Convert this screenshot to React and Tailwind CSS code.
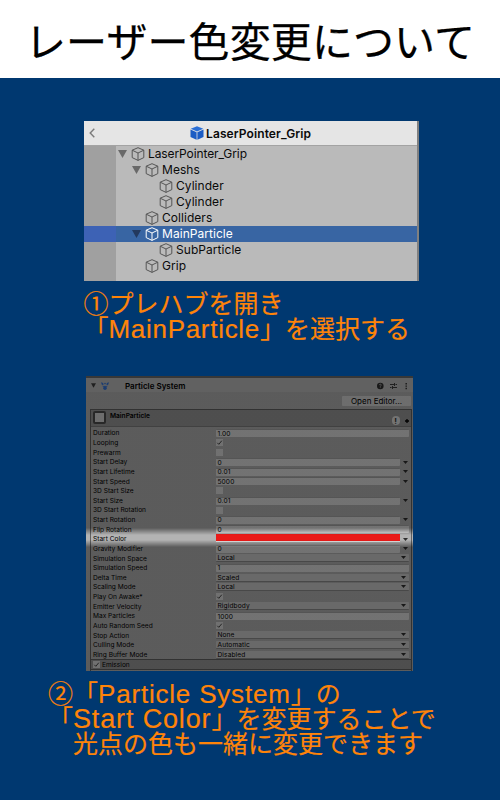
const TREE = [
  { name: 'LaserPointer_Grip', pad: 'pl-0', open: true },
  { name: 'Meshs', pad: 'pl-[14px]', open: true },
  { name: 'Cylinder', pad: 'pl-[28px]' },
  { name: 'Cylinder', pad: 'pl-[28px]' },
  { name: 'Colliders', pad: 'pl-[14px]' },
  { name: 'MainParticle', pad: 'pl-[14px]', open: true, selected: true },
  { name: 'SubParticle', pad: 'pl-[28px]' },
  { name: 'Grip', pad: 'pl-[14px]' },
];

// kinds: full (plain field), curve (field with outer arrow), check, select, color
const PROPS = [
  ['Duration', 'full', '1.00'],
  ['Looping', 'check', true],
  ['Prewarm', 'check', false],
  ['Start Delay', 'curve', '0'],
  ['Start Lifetime', 'curve', '0.01'],
  ['Start Speed', 'curve', '5000'],
  ['3D Start Size', 'check', false],
  ['Start Size', 'curve', '0.01'],
  ['3D Start Rotation', 'check', false],
  ['Start Rotation', 'curve', '0'],
  ['Flip Rotation', 'full', '0'],
  ['Start Color', 'color', ''],
  ['Gravity Modifier', 'curve', '0'],
  ['Simulation Space', 'select', 'Local'],
  ['Simulation Speed', 'full', '1'],
  ['Delta Time', 'select', 'Scaled'],
  ['Scaling Mode', 'select', 'Local'],
  ['Play On Awake*', 'check', true],
  ['Emitter Velocity', 'select', 'Rigidbody'],
  ['Max Particles', 'full', '1000'],
  ['Auto Random Seed', 'check', true],
  ['Stop Action', 'select', 'None'],
  ['Culling Mode', 'select', 'Automatic'],
  ['Ring Buffer Mode', 'select', 'Disabled'],
];

function Cube({ className }) {
  return (
    <svg viewBox="0 0 14 14" className={className} fill="none" stroke="currentColor" strokeWidth="1" strokeLinejoin="round">
      <path d="M7 .7 12.8 3.2V10.6L7 13.4 1.2 10.6V3.2ZM1.2 3.2 7 6 12.8 3.2M7 6V13.4" />
    </svg>
  );
}

function SolidCube() {
  return (
    <svg viewBox="0 0 14 14" className="h-[14px] w-[14px] shrink-0">
      <path d="M7 .3 13.3 2.8 7 5.5.7 2.8Z" fill="#2a6fd6" />
      <path d="M.5 3.6 6.6 6.2V13.8L.5 11Z" fill="#1b5cc4" />
      <path d="M13.5 3.6 7.4 6.2V13.8L13.5 11Z" fill="#1b5cc4" />
    </svg>
  );
}

function Fold({ className }) {
  return (
    <svg viewBox="0 0 9 8" className={className}>
      <path d="M0 0H9L4.5 8Z" fill="currentColor" />
    </svg>
  );
}

function Arrow() {
  return (
    <svg viewBox="0 0 5 3" className="h-[3px] w-[5px] shrink-0">
      <path d="M0 0H5L2.5 3Z" fill="#333" />
    </svg>
  );
}

function Check({ on }) {
  return (
    <div className="h-[7px] w-[7px] bg-[#efefef]">
      {on && (
        <svg viewBox="0 0 7 7" className="h-[7px] w-[7px]">
          <path d="M1.3 3.8 2.8 5.3 5.8 1.7" fill="none" stroke="#222" strokeWidth=".8" />
        </svg>
      )}
    </div>
  );
}

function Control({ kind, value }) {
  if (kind === 'check') return <Check on={value} />;
  if (kind === 'color')
    return (
      <>
        <div className="mb-[2px] h-[8px] w-[184px] border-b border-white bg-[#ff1c1a]" />
        <div className="ml-[2.5px] flex"><Arrow /></div>
      </>
    );
  if (kind === 'select')
    return (
      <div className="flex h-[8px] w-[193px] items-center justify-between rounded-[1px] border-b border-[#999] bg-[#dfdfdf] pr-[3.5px] pl-[1.5px]">
        <span className="pt-[1px] tracking-[0.1px]">{value}</span>
        <Arrow />
      </div>
    );
  return (
    <>
      <div className={`flex h-[8px] items-center rounded-[1px] border-t border-[#b4b4b4] bg-[#f3f3f3] pl-[1.5px] ${kind === 'full' ? 'w-[193px]' : 'w-[184px]'}`}>
        <span className="tracking-[0.1px]">{value}</span>
      </div>
      {kind === 'curve' && <div className="ml-[2.5px] flex"><Arrow /></div>}
    </>
  );
}

function Hierarchy() {
  return (
    <div className="ml-[84px] flex h-[160px] w-[335px] flex-col border-r-2 border-[#808080] bg-[#bababa] font-['Inter',sans-serif] text-[12px] text-[#0a0a0a]">
      <div className="flex h-[25px] shrink-0 items-center border-b border-[#a3a3a3] bg-[#e5e5e5]">
        <svg viewBox="0 0 6 10" className="ml-[5px] h-[10px] w-[6px]">
          <path d="M5.3.8 1.2 5 5.3 9.2" fill="none" stroke="#7b7b7b" strokeWidth="1.4" />
        </svg>
        <div className="ml-[95px] flex items-center gap-[2px]">
          <SolidCube />
          <span className="pt-[1px] text-[12px] font-semibold tracking-[0.1px]">LaserPointer_Grip</span>
        </div>
      </div>
      <div className="flex flex-1 bg-[linear-gradient(90deg,#a0a0a0_32px,#bababa_32px)]">
        <div className="w-full">
          {TREE.map((r, i) => (
            <div
              key={i}
              className={`flex h-4 items-center ${r.selected ? 'bg-[linear-gradient(90deg,#3d62b5_32px,#3865a3_32px)] text-white' : ''}`}
            >
              <div className={`ml-[34px] flex items-center ${r.pad}`}>
                <div className="w-[12.5px]">
                  {r.open && <Fold className={`h-[8px] w-[9px] ${r.selected ? 'text-[#23395e]' : 'text-[#696969]'}`} />}
                </div>
                <Cube className={`h-[14px] w-[14px] ${r.selected ? 'text-white' : 'text-[#555]'}`} />
                <span className={`ml-[3.5px] leading-4 ${i === 0 ? 'tracking-[-0.1px]' : 'tracking-[0.05px]'}`}>{r.name}</span>
              </div>
            </div>
          ))}
        </div>
      </div>
    </div>
  );
}

function Inspector() {
  return (
    <div className="relative ml-[86px] h-[295px] w-[327px] overflow-hidden bg-[#c2c2c2] font-['Inter',sans-serif] text-[6.6px] leading-[8px] text-black">
      <div className="flex h-[16px] items-center border-t-2 border-[#777] bg-[#cecece] pt-[1px] pr-[5px] pl-[5px]">
        <Fold className="h-[5px] w-[5px] text-[#444]" />
        <svg viewBox="0 0 8 8" className="ml-[4.5px] h-[8px] w-[8px]" fill="#3a80ee">
          <path d="M0 .3 2.2 1 2.6 3.2.8 2.8ZM8 .3 5.8 1 5.4 3.2 7.2 2.8ZM1.2 3.4 3 4.6 4 3.6 5 4.6 6.8 3.4 5.6 5.4H2.4Z" />
          <circle cx="4" cy="1.6" r=".8" />
          <circle cx="4" cy="6.2" r="1.7" />
        </svg>
        <span className="ml-[16.5px] text-[8px] font-semibold">Particle System</span>
        <svg viewBox="0 0 32 8" className="ml-auto h-[8px] w-[32px]">
          <circle cx="4.3" cy="4" r="3.3" fill="#333" />
          <path d="M3.3 3.2Q3.4 2.2 4.3 2.2 5.3 2.2 5.3 3.1 5.3 3.7 4.3 4.2V4.7M4.3 5.3V6" fill="none" stroke="#ccc" strokeWidth=".8" />
          <path d="M14 2.5H18M19.5 2.5H21M14 5.5H15.5M17 5.5H21M18.5 1V4M16.5 4V7" stroke="#333" strokeWidth=".9" />
          <path d="M29.5 1H30.9V2.4H29.5ZM29.5 3.4H30.9V4.8H29.5ZM29.5 5.8H30.9V7.2H29.5Z" fill="#333" />
        </svg>
      </div>
      <div className="flex h-[17px] items-start justify-end pt-[4px] pr-[2px]">
        <div className="flex h-[10px] w-[69px] items-center justify-center rounded-[1px] bg-[#e8e8e8] text-[8px]">Open Editor...</div>
      </div>
      <div className="mr-[1.5px] ml-[4px] h-[262px] border-t border-r border-l border-[#6a6a6a]">
        <div className="flex h-[17px] items-start border-b border-[#8a8a8a] bg-[#a6a6a6]">
          <div className="mt-[1px] ml-[2px] h-[13px] w-[13px] rounded-[2px] border-2 border-[#555] bg-[#e8e8e8]" />
          <span className="mt-[1.5px] ml-[4px] font-semibold">MainParticle</span>
          <div className="mt-[6px] mr-[2px] ml-auto flex items-center gap-[5px]">
            <div className="flex h-[9px] w-[8px] items-center justify-center rounded-full bg-[#f4f4f4] text-[8px] font-bold text-[#333]">!</div>
            <svg viewBox="0 0 4 4" className="h-[4px] w-[4px]"><path d="M2 0V4M0 2H4" stroke="#000" strokeWidth="1.3" /></svg>
          </div>
        </div>
        <div className="pt-[1.4px]">
          {PROPS.map(([label, kind, value]) => (
            <div key={label} className="flex h-[9.635px] items-center pl-[2px]">
              <span className="w-[123px] pt-[0.4px] whitespace-nowrap">{label}</span>
              <Control kind={kind} value={value} />
            </div>
          ))}
        </div>
        <div className="flex h-[11px] items-center border-y border-[#6a6a6a] bg-[#a6a6a6] pl-[2px]">
          <Check on />
          <span className="ml-[2px]">Emission</span>
        </div>
      </div>
      {/* dimming veil that leaves the Start Color row lit */}
      <div className="absolute inset-0 bg-[linear-gradient(180deg,rgba(0,0,0,.53)_152px,rgba(0,0,0,.08)_159px,rgba(0,0,0,.08)_164px,rgba(0,0,0,.53)_171px)]" />
    </div>
  );
}

const LATIN = "font-['Liberation_Sans',sans-serif] text-[26px]";
const CAPTION = 'text-[25px] leading-[25px] whitespace-nowrap text-[#ff8408] [-webkit-text-stroke:0.2px_#ff8408]';

export default function App() {
  return (
    <div className="h-[800px] w-[500px] overflow-hidden bg-[#003870] font-['Noto_Sans_CJK_JP',sans-serif]">
      <div className="flex h-[78px] items-center bg-white pl-[25px] text-[41px] leading-[78px] tracking-[0.1px] whitespace-nowrap text-black [-webkit-text-stroke:0.25px_#000]">
        レーザー色変更について
      </div>
      <div className="h-[43px]" />
      <Hierarchy />
      <div className={`h-[95px] pt-[9px] pl-[83.5px] ${CAPTION}`}>
        <div className="h-[25px]">①プレハブを開き</div>
        <div className="h-[25px]">
          「<span className={`${LATIN} tracking-[0.7px]`}>MainParticle</span>」を選択する
        </div>
      </div>
      <Inspector />
      <div className={`pt-[8.5px] pl-[48px] ${CAPTION}`}>
        <div className="h-[25px]">
          ②「<span className={`${LATIN} tracking-[0.8px]`}>Particle System</span>」の
        </div>
        <div className="h-[25px]">
          「<span className="font-['Liberation_Sans',sans-serif] text-[27px] tracking-[0.85px]">Start Color</span>」を変更することで
        </div>
        <div className="h-[25px] pl-[25px]">光点の色も一緒に変更できます</div>
      </div>
    </div>
  );
}
